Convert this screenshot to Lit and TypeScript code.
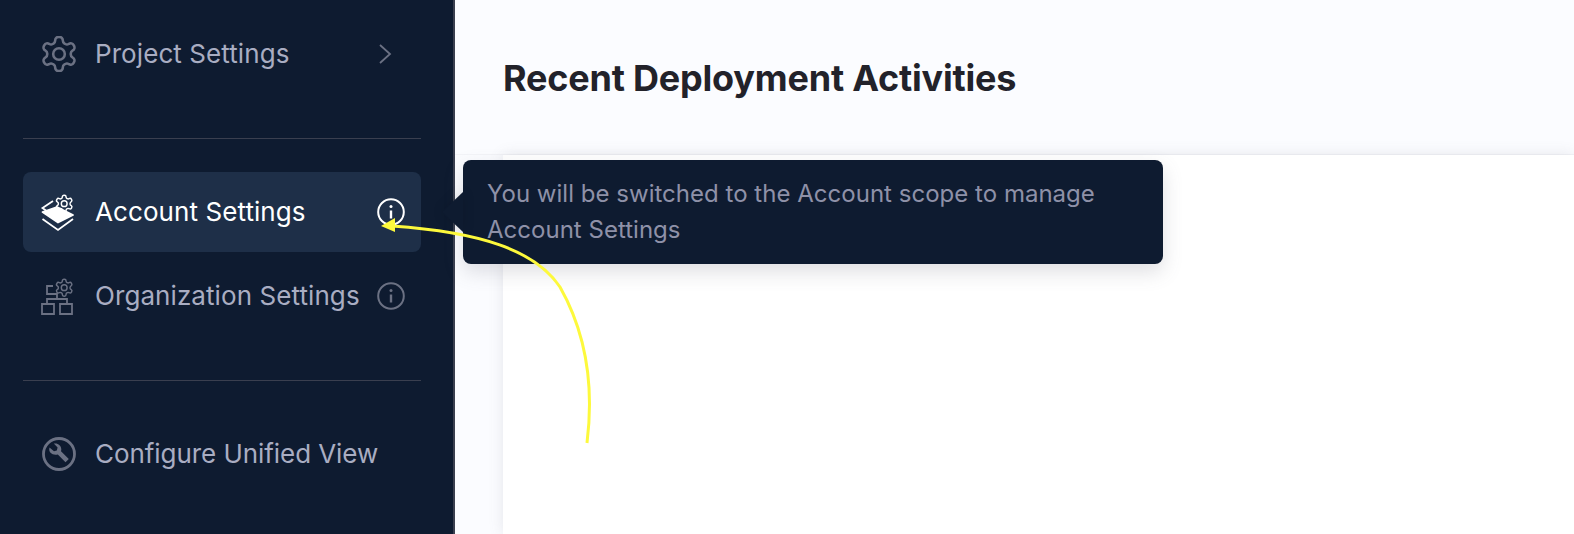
import { LitElement, html, css, svg } from "lit";
import { customElement } from "lit/decorators.js";

const cog = svg`<path d="M12.22 2h-.44a2 2 0 0 0-2 2v.18a2 2 0 0 1-1 1.73l-.43.25a2 2 0 0 1-2 0l-.15-.08a2 2 0 0 0-2.73.73l-.22.38a2 2 0 0 0 .73 2.73l.15.1a2 2 0 0 1 1 1.72v.51a2 2 0 0 1-1 1.74l-.15.09a2 2 0 0 0-.73 2.73l.22.38a2 2 0 0 0 2.73.73l.15-.08a2 2 0 0 1 2 0l.43.25a2 2 0 0 1 1 1.73V20a2 2 0 0 0 2 2h.44a2 2 0 0 0 2-2v-.18a2 2 0 0 1 1-1.73l.43-.25a2 2 0 0 1 2 0l.15.08a2 2 0 0 0 2.73-.73l.22-.39a2 2 0 0 0-.73-2.73l-.15-.08a2 2 0 0 1-1-1.74v-.5a2 2 0 0 1 1-1.74l.15-.09a2 2 0 0 0 .73-2.73l-.22-.38a2 2 0 0 0-2.73-.73l-.15.08a2 2 0 0 1-2 0l-.43-.25a2 2 0 0 1-1-1.73V4a2 2 0 0 0-2-2z"/><circle cx="12" cy="12" r="3.400"/>`;

const smallCog = svg`<g transform="translate(13 -.5) scale(.85)" fill="none" stroke="currentColor" stroke-width="1.700">${cog}</g>`;

const icons = {
  gear: html`<svg width="36" height="36" viewBox="1.500 1.500 21 21" fill="none" stroke="currentColor" stroke-width="1.500">${cog}</svg>`,
  account: html`<svg width="36" height="36" viewBox="0 0 36 36" fill="none" stroke="currentColor" stroke-width="1.800" overflow="visible">
    ${smallCog}
    <path d="M12 7 1.500 14 7 18" />
    <path d="M1.500 18 16 13l16 8-15 7.500z" fill="currentColor" stroke-linejoin="round" />
    <path d="M1.500 25 17 36l15-11" />
  </svg>`,
  org: html`<svg width="36" height="36" viewBox="0 0 36 36" fill="none" stroke="currentColor" stroke-width="1.800" overflow="visible">
    ${smallCog}
    <path d="M12 8H6v8h10v5M6 26v-5h20v5" />
    <path d="M1 26h12v10H1zM19 26h12v10H19z" />
  </svg>`,
  wrench: html`<svg width="36" height="36" viewBox="0 0 36 36" fill="none" stroke="currentColor">
    <circle cx="18" cy="18" r="15.500" stroke-width="2.800" />
    <path d="M8.500 11.500l4.500 3.700 2.800-.8.800-2.900-3.800-3.900c3.800-.9 7.500 1.800 7.500 5.700 0 .8-.1 1.400-.3 2l7.800 7.600-3.300 3.300-7.700-7.800c-4.800 1.400-9.800-1.900-8.300-6.900z" fill="currentColor" stroke="none" />
  </svg>`,
  chevron: html`<svg width="14" height="22" viewBox="0 0 14 22" fill="none" stroke="currentColor" stroke-width="1.800"><path d="M2 2l10 9-10 9" /></svg>`,
  info: html`<svg width="28" height="28" viewBox="0 0 28 28" fill="none" stroke="currentColor" stroke-width="2"><circle cx="14" cy="14" r="12.800" /><path d="M14 12.500v8" stroke-width="2.400" /><circle cx="14" cy="8.500" r="1.500" fill="currentColor" stroke="none" /></svg>`,
};

@customElement("app-root")
export class AppRoot extends LitElement {
  static styles = css`
    :host {
      display: block;
      position: relative;
      width: 1574px;
      height: 534px;
      overflow: hidden;
      font-family: Inter, "Liberation Sans", sans-serif;
      background: #fbfcff;
    }
    .layout {
      display: flex;
      height: 100%;
    }
    .sidebar {
      box-sizing: border-box;
      width: 455px;
      flex: none;
      padding: 14px 32px 0 23px;
      background: #0e1b30;
      border-right: 2px solid #3a3f4f;
    }
    .row {
      display: flex;
      align-items: center;
      height: 80px;
      padding: 0 16px 0 18px;
      border-radius: 8px;
      font-size: 26px;
      letter-spacing: 0.08px;
      color: #a9adc2;
    }
    .row .icon {
      display: flex;
      color: #6b7183;
      margin-right: 18px;
    }
    .row .label {
      flex: 1;
      padding-bottom: 2px;
    }
    .row .label.tight {
      letter-spacing: -0.06px;
    }
    .row .end {
      display: flex;
      color: #6b7183;
    }
    .row.chevron .end {
      margin-right: 13px;
    }
    .row.active {
      background: #1e2f48;
      color: #ffffff;
    }
    .row.active .icon,
    .row.active .end {
      color: #ffffff;
    }
    .row + .row {
      margin-top: 4px;
    }
    .divider {
      height: 1px;
      background: #3a3f4f;
    }
    .divider.first {
      margin: 44px 0 33px;
    }
    .divider.second {
      margin: 44px 0 33px;
    }
    .main {
      flex: 1;
      display: flex;
      flex-direction: column;
      min-width: 0;
    }
    .header {
      height: 155px;
      flex: none;
      box-sizing: border-box;
      padding: 54px 0 0 48px;
      border-bottom: 1px solid #f3f4f8;
    }
    h1 {
      margin: 0;
      font-size: 36px;
      line-height: 48px;
      font-weight: 700;
      letter-spacing: -0.2px;
      color: #22222a;
    }
    .body {
      flex: 1;
      padding-left: 48px;
    }
    .card {
      height: 100%;
      background: #ffffff;
      box-shadow: 0 0 14px rgba(96, 97, 112, 0.14);
    }
    .tooltip {
      position: absolute;
      left: 463px;
      top: 160px;
      box-sizing: border-box;
      width: 700px;
      height: 104px;
      padding: 16px 24px;
      background: #0e1b30;
      border-radius: 8px;
      font-size: 24px;
      letter-spacing: 0.02px;
      line-height: 36px;
      color: #8e91a8;
      box-shadow: 0 8px 20px rgba(96, 97, 112, 0.2);
    }
    .tooltip::before {
      content: "";
      position: absolute;
      left: -21px;
      top: 32px;
      border: 20px solid transparent;
      border-left: 0;
      border-right: 21px solid #0e1b30;
      filter: drop-shadow(0 0 6px rgba(0, 0, 0, 0.12));
    }
    .annotation {
      position: absolute;
      inset: 0;
      pointer-events: none;
    }
  `;

  render() {
    return html`
      <div class="layout">
        <nav class="sidebar">
          <div class="row chevron">
            <span class="icon">${icons.gear}</span>
            <span class="label">Project Settings</span>
            <span class="end">${icons.chevron}</span>
          </div>
          <div class="divider first"></div>
          <div class="row active">
            <span class="icon">${icons.account}</span>
            <span class="label">Account Settings</span>
            <span class="end">${icons.info}</span>
          </div>
          <div class="row">
            <span class="icon">${icons.org}</span>
            <span class="label">Organization Settings</span>
            <span class="end">${icons.info}</span>
          </div>
          <div class="divider second"></div>
          <div class="row">
            <span class="icon">${icons.wrench}</span>
            <span class="label tight">Configure Unified View</span>
          </div>
        </nav>
        <main class="main">
          <header class="header"><h1>Recent Deployment Activities</h1></header>
          <div class="body"><div class="card"></div></div>
        </main>
      </div>
      <div class="tooltip">You will be switched to the Account scope to manage Account Settings</div>
      <svg class="annotation" width="1574" height="534" viewBox="0 0 1574 534" fill="none">
        <path d="M587 443C593 395 590 340 560 287C535 250 480 232 392 226" stroke="#fdf93c" stroke-width="3" />
        <path d="M381 226l14-8v14z" fill="#fdf93c" />
      </svg>
    `;
  }
}
